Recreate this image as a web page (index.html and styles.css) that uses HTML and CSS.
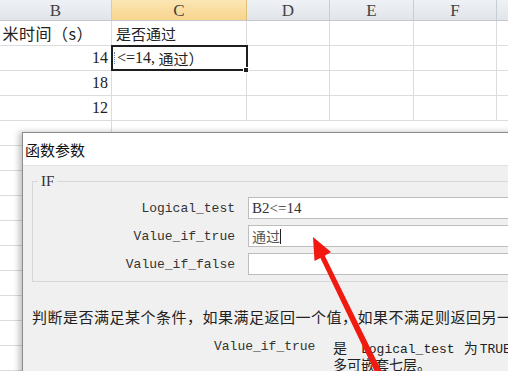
FILE: index.html
```html
<!DOCTYPE html>
<html lang="zh-CN">
<head>
    <meta charset="UTF-8">
    <title>函数参数</title>
    <link rel="stylesheet" href="styles.css">
</head>
<body>
    <div class="sheet">
        <div class="row head">
            <div class="cell col-b">B</div>
            <div class="cell col-c active-col">C</div>
            <div class="cell col-d">D</div>
            <div class="cell col-e">E</div>
            <div class="cell col-f">F</div>
            <div class="cell col-g"></div>
        </div>
        <div class="row">
            <div class="cell col-b right cjk">米时间（s）</div>
            <div class="cell col-c cjk">是否通过</div>
            <div class="cell col-d"></div>
            <div class="cell col-e"></div>
            <div class="cell col-f"></div>
            <div class="cell col-g"></div>
        </div>
        <div class="row">
            <div class="cell col-b right num">14</div>
            <div class="cell col-c selected"><span class="caret"></span><span class="num">&lt;=14,</span><span class="cjk">&nbsp;通过）</span><span class="handle"></span></div>
            <div class="cell col-d"></div>
            <div class="cell col-e"></div>
            <div class="cell col-f"></div>
            <div class="cell col-g"></div>
        </div>
        <div class="row">
            <div class="cell col-b right num">18</div>
            <div class="cell col-c"></div>
            <div class="cell col-d"></div>
            <div class="cell col-e"></div>
            <div class="cell col-f"></div>
            <div class="cell col-g"></div>
        </div>
        <div class="row">
            <div class="cell col-b right num">12</div>
            <div class="cell col-c"></div>
            <div class="cell col-d"></div>
            <div class="cell col-e"></div>
            <div class="cell col-f"></div>
            <div class="cell col-g"></div>
        </div>
        <div class="row"><div class="cell col-b"></div></div>
        <div class="row"><div class="cell col-b"></div></div>
        <div class="row"><div class="cell col-b"></div></div>
        <div class="row"><div class="cell col-b"></div></div>
        <div class="row"><div class="cell col-b"></div></div>
        <div class="row"><div class="cell col-b"></div></div>
        <div class="row"><div class="cell col-b"></div></div>
        <div class="row"><div class="cell col-b"></div></div>
        <div class="row"><div class="cell col-b"></div></div>
        <div class="row"><div class="cell col-b"></div></div>
    </div>

    <div class="dialog">
        <div class="title">函数参数</div>
        <div class="body">
            <fieldset class="group">
                <legend>IF</legend>
                <div class="args">
                    <label>Logical_test</label>
                    <div class="field">B2&lt;=14</div>
                    <label>Value_if_true</label>
                    <div class="field cjk">通过<span class="cursor"></span></div>
                    <label>Value_if_false</label>
                    <div class="field focus"></div>
                </div>
            </fieldset>
            <p class="desc cjk">判断是否满足某个条件，如果满足返回一个值，如果不满足则返回另一个值。</p>
            <div class="arg-help">
                <span class="arg-name">Value_if_true</span>
                <div class="arg-text">
                    <p class="line1">是<span class="mono term">Logical_test</span>为<span class="mono tail">TRUE</span></p>
                    <p class="line2">多可嵌套七层。</p>
                </div>
            </div>
        </div>
    </div>

    <svg class="arrow" width="508" height="371" viewBox="0 0 508 371">
        <polygon points="313,237 331,252 324.8,255.7 381.5,371 374.5,371 320.4,258 314.5,261" fill="#f01a10"/>
    </svg>
</body>
</html>
```

FILE: styles.css
```css
html, body {
    margin: 0;
    width: 508px;
    height: 371px;
    overflow: hidden;
    background: #ffffff;
}
body {
    position: relative;
    font-family: "Liberation Serif", "Noto Sans CJK SC", serif;
    color: #222;
}
.cjk {
    font-family: "Noto Sans CJK SC", sans-serif;
}
.num {
    font-family: "Liberation Serif", serif;
}
.mono {
    font-family: "Liberation Mono", monospace;
}

/* spreadsheet */
.sheet {
    display: flex;
    flex-direction: column;
}
.row {
    display: flex;
    height: 24px;
    border-bottom: 1px solid #dadcdf;
}
.row.head {
    height: 20px;
    background: linear-gradient(#eef1f5, #e1e5ea);
    border-bottom: 1px solid #c3c8cf;
}
.cell {
    box-sizing: border-box;
    height: 100%;
    border-right: 1px solid #dadcdf;
    display: flex;
    align-items: center;
    font-size: 16px;
    padding: 0 3px;
    white-space: nowrap;
    position: relative;
}
.head .cell {
    justify-content: center;
    border-right-color: #c8cdd4;
    font-size: 17px;
    color: #444;
    padding-top: 1px;
}
.head .active-col {
    background: linear-gradient(#fbe6b4, #f7d58c);
    border-right-color: #e3bf73;
}
.col-b { width: 112px; }
.col-c { width: 135px; }
.col-d { width: 83px; }
.col-e { width: 84px; }
.col-f { width: 83px; }
.col-g { flex: 1; border-right: none; }
.right {
    justify-content: flex-end;
}
.col-b.cjk {
    font-size: 16px;
    padding-right: 18px;
    letter-spacing: 0.5px;
}
.col-c.cjk {
    font-size: 15px;
    padding-left: 4px;
}
.selected {
    outline: 2px solid #1e1e1e;
    outline-offset: -1px;
    padding-left: 2px;
    z-index: 1;
}
.selected .cjk {
    font-size: 15px;
}
.caret {
    width: 1px;
    height: 12px;
    margin-right: 1px;
    border-left: 1px dotted #5a88c9;
}
.handle {
    position: absolute;
    right: -3px;
    bottom: -3px;
    width: 4px;
    height: 4px;
    background: #1e1e1e;
    border: 1px solid #fff;
}

/* dialog */
.dialog {
    position: absolute;
    left: 22px;
    top: 132px;
    width: 520px;
    height: 260px;
    background: #f0f0f0;
    border-left: 1px solid #8d8d8d;
    border-top: 1px solid #8d8d8d;
    box-shadow: -3px 0 6px rgba(0, 0, 0, 0.25);
}
.title {
    height: 32px;
    background: #ffffff;
    display: flex;
    align-items: center;
    padding-left: 2px;
    font-family: "Noto Sans CJK SC", sans-serif;
    font-size: 15px;
    color: #111;
    border-bottom: 1px solid #e2e2e2;
}
.body {
    padding: 0 0 0 9px;
}
.group {
    margin: 7px 0 0 0;
    padding: 8px 0 6px 0;
    border: 1px solid #d7d7d7;
    border-right: none;
    min-width: 0;
}
.group legend {
    margin-left: 5px;
    padding: 0 3px;
    font-family: "Liberation Serif", serif;
    font-size: 15px;
    line-height: 16px;
    color: #333;
}
.args {
    display: grid;
    grid-template-columns: 202px 1fr;
    column-gap: 13px;
    row-gap: 6px;
    align-items: center;
}
.args label {
    text-align: right;
    font-family: "Liberation Mono", monospace;
    font-size: 13px;
    color: #333;
}
.field {
    height: 22px;
    box-sizing: border-box;
    background: #fff;
    border: 1px solid #bdbdbd;
    margin-right: 13px;
    display: flex;
    align-items: center;
    padding-left: 3px;
    font-size: 15px;
    color: #333;
}
.field.cjk {
    font-size: 14px;
    color: #555;
}
.field.focus {
    border-right-color: #6fa3d8;
}
.cursor {
    width: 1px;
    height: 15px;
    background: #222;
}
.desc {
    margin: 25px 0 0 0;
    font-size: 15px;
    line-height: 20px;
    letter-spacing: 0.5px;
    white-space: nowrap;
    color: #222;
}
.arg-help {
    display: flex;
    margin-top: 13px;
    white-space: nowrap;
    font-size: 14px;
    line-height: 14px;
}
.arg-name {
    flex-shrink: 0;
    width: 119px;
    margin-left: 182px;
    font-family: "Liberation Mono", monospace;
    font-size: 13px;
    color: #333;
}
.arg-text p {
    margin: 0;
    font-family: "Noto Sans CJK SC", sans-serif;
    font-size: 14px;
    color: #222;
}
.arg-text .mono {
    font-size: 13px;
}
.arg-text .term {
    margin: 0 9px 0 14px;
}
.arg-text .tail {
    margin-left: 2px;
}

.arrow {
    position: absolute;
    left: 0;
    top: 0;
}
```
